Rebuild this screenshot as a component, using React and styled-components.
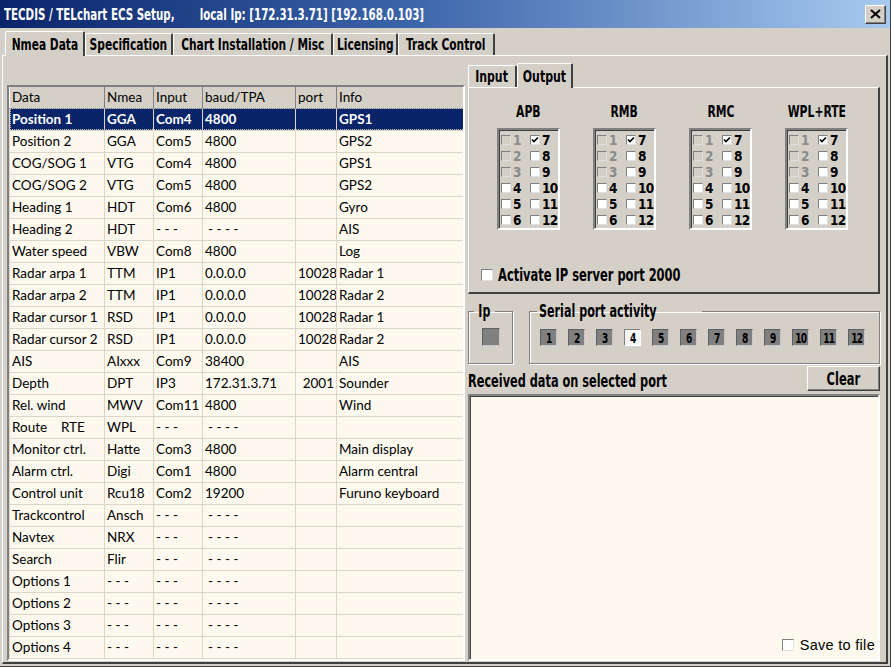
import React from 'react';
import styled, { createGlobalStyle } from 'styled-components';

const narrow = `"Liberation Sans Narrow", "DejaVu Sans Condensed", "Arial Narrow", sans-serif`;
const grid = `Lato, "Open Sans", "Liberation Sans", sans-serif`;

const GlobalStyle = createGlobalStyle`
    html, body {
        margin: 0;
        padding: 0;
        background: #d4d0c8;
    }
    * { box-sizing: border-box; }
`;

// the dialog uses a tall condensed bitmap face; squeeze DejaVu Condensed to match
const Narrow = styled.span`
    display: inline-block;
    white-space: pre;
    transform: scaleX(${p => p.$s || 0.73});
    transform-origin: ${p => p.$origin || 'center'};
    letter-spacing: ${p => p.$ls || 0}px;
`;

const Window = styled.div`
    width: 891px;
    height: 667px;
    background: #d4d0c8;
    display: flex;
    flex-direction: column;
    overflow: hidden;
    border-right: 1px solid #404040;
    border-bottom: 1px solid #404040;
`;

const TitleBar = styled.div`
    height: 28px;
    flex: none;
    display: flex;
    align-items: center;
    justify-content: space-between;
    padding: 0 4px 0 4px;
    background: linear-gradient(90deg, #0a246a 0%, #3a63a8 45%, #a6caf0 100%);
    color: #fff;
    font-family: ${narrow};
    font-weight: bold;
    font-size: 16px;
`;

const CloseButton = styled.div`
    width: 21px;
    height: 19px;
    background: #d4d0c8;
    border: 1px solid;
    border-color: #fff #404040 #404040 #fff;
    box-shadow: inset -1px -1px 0 #808080;
    display: flex;
    align-items: center;
    justify-content: center;
`;

const TabStrip = styled.div`
    height: ${p => p.$h || 27}px;
    flex: none;
    display: flex;
    align-items: flex-end;
    padding-left: ${p => p.$pad ?? 5}px;
`;

const Tab = styled.div`
    width: ${p => p.$w}px;
    height: ${p => (p.$active ? 25 : 22)}px;
    margin-bottom: ${p => (p.$active ? -1 : 0)}px;
    display: flex;
    align-items: center;
    justify-content: center;
    font-family: ${narrow};
    font-weight: bold;
    font-size: 16px;
    color: #000;
    background: #d4d0c8;
    border-top: 1px solid #fff;
    border-left: 1px solid #fff;
    border-right: 2px solid #404040;
    border-radius: 2px 2px 0 0;
    position: relative;
    z-index: ${p => (p.$active ? 2 : 1)};
`;

const Panel = styled.div`
    flex: 1;
    margin: 0 2px 4px 2px;
    border-top: 1px solid #fff;
    border-left: 1px solid #fff;
    border-right: 2px solid #404040;
    border-bottom: 2px solid #404040;
    display: flex;
    gap: 3px;
    padding: 0 6px 1px 4px;
`;

const LeftCol = styled.div`
    width: 458px;
    padding-top: 29px;
    display: flex;
`;

const GridFrame = styled.div`
    flex: 1;
    border: 2px solid;
    border-color: #808080 #fff #fff #808080;
    background: #fdf9ef;
    overflow: hidden;
`;

const Table = styled.table`
    border-collapse: collapse;
    table-layout: fixed;
    width: 455px;
    font-family: ${grid};
    font-size: 13.5px;
    color: #000;
`;

const Th = styled.th`
    height: 21px;
    background: #d4d0c8;
    font-weight: normal;
    text-align: left;
    padding: 0 2px;
    border-right: 1px solid #808080;
    border-left: 1px solid #fff;
    border-bottom: 1px solid #808080;
    white-space: nowrap;
`;

const Row = styled.tr`
    background: ${p => (p.$selected ? '#0a246a' : 'transparent')};
    color: ${p => (p.$selected ? '#fff' : '#000')};
    font-weight: ${p => (p.$selected ? 'bold' : 'normal')};
    outline: ${p => (p.$selected ? '1px dotted #c0c0c0' : 'none')};
    outline-offset: -1px;
`;

const Td = styled.td`
    height: 22px;
    padding: 0 2px;
    border: 1px solid #ddd6c6;
    white-space: pre;
    overflow: hidden;
    text-align: ${p => (p.$right ? 'right' : 'left')};
    padding-left: ${p => (p.$indent ? 5 : 2)}px;
`;

const RightCol = styled.div`
    flex: 1;
    display: flex;
    flex-direction: column;
`;

const OutputPanel = styled.div`
    height: 207px;
    border-top: 1px solid #fff;
    border-left: 1px solid #fff;
    border-right: 2px solid #404040;
    border-bottom: 2px solid #404040;
    display: flex;
    flex-direction: column;
    padding: 14px 0 0 0;
`;

const Groups = styled.div`
    display: grid;
    grid-template-columns: repeat(4, 96px);
    padding-left: 20px;
`;

const Group = styled.div`
    display: flex;
    flex-direction: column;
    align-items: center;
    width: 96px;
    padding-right: 17px;
`;

const GroupTitle = styled.div`
    font-family: ${narrow};
    font-weight: bold;
    font-size: 16px;
    height: 20px;
    line-height: 20px;
    margin-bottom: 6px;
`;

const CheckList = styled.div`
    width: 63px;
    height: 102px;
    border: 2px solid;
    border-color: #808080 #fff #fff #808080;
    box-shadow: inset 1px 1px 0 #404040;
    display: grid;
    grid-template-columns: 29px 1fr;
    grid-auto-flow: column;
    grid-template-rows: repeat(6, 16px);
    padding: 2px 0 0 2px;
`;

const CheckItem = styled.div`
    display: flex;
    align-items: center;
    gap: 2px;
    font-family: ${narrow};
    font-weight: bold;
    font-size: 13.5px;
    letter-spacing: -0.6px;
    color: ${p => (p.$disabled ? '#8a8a8a' : '#000')};
    line-height: 16px;
`;

const Box = styled.span`
    width: ${p => p.$size || 10}px;
    height: ${p => p.$size || 10}px;
    flex: none;
    background: ${p => (p.$disabled ? '#d4d0c8' : '#fff')};
    border: 1px solid;
    border-color: #808080 #e0e0e0 #e0e0e0 #808080;
    display: inline-flex;
    align-items: center;
    justify-content: center;
`;

const Check = () => (
    <svg width="8" height="8" viewBox="0 0 8 8">
        <path d="M1 3.5 L3 5.5 L7 1.5" stroke="#000" strokeWidth="1.6" fill="none" />
    </svg>
);

const CheckLine = styled.label`
    display: flex;
    align-items: center;
    gap: 5px;
    margin: auto 0 7px 12px;
    font-family: ${narrow};
    font-weight: bold;
    font-size: 17px;
`;

const ActivityRow = styled.div`
    display: flex;
    gap: 16px;
    margin-top: 7px;
`;

const GroupBox = styled.fieldset`
    margin: 0;
    height: 63px;
    width: ${p => p.$w}px;
    border: 1px solid #808080;
    box-shadow: 1px 1px 0 #fff, inset 1px 1px 0 #fff;
    padding: 0;
    font-family: ${narrow};
    font-weight: bold;

    legend {
        font-size: 17px;
        padding: 0 2px;
        margin-left: ${p => p.$lm || 6}px;
    }
`;

const LedRow = styled.div`
    display: flex;
    gap: 11px;
    padding: ${p => p.$pt}px 0 0 ${p => p.$pl}px;
`;

const Led = styled.div`
    width: ${p => p.$size || 17}px;
    height: ${p => p.$size || 17}px;
    flex: none;
    background: ${p => (p.$on ? '#f4f4f4' : '#808080')};
    border: 1px solid;
    border-color: ${p => (p.$on ? '#808080 #fff #fff #808080' : '#606060 #c8c8c8 #c8c8c8 #606060')};
    display: flex;
    align-items: center;
    justify-content: center;
    font-size: 14px;
    color: #000;
`;

const DataHeader = styled.div`
    display: flex;
    align-items: flex-end;
    justify-content: space-between;
    height: 28px;
    padding-bottom: 1px;
    font-family: ${narrow};
    font-weight: bold;
    font-size: 17px;
`;

const Button = styled.div`
    width: 73px;
    height: 25px;
    display: flex;
    align-items: center;
    justify-content: center;
    border: 1px solid;
    border-color: #fff #404040 #404040 #fff;
    box-shadow: inset -1px -1px 0 #808080;
    font-size: 17px;
`;

const DataArea = styled.div`
    flex: 1;
    margin-top: 2px;
    background: #fdf9ef;
    border: 2px solid;
    border-color: #808080 #fff #fff #808080;
    box-shadow: inset 1px 1px 0 #404040;
    display: flex;
    align-items: flex-end;
    justify-content: flex-end;
    padding: 0 3px 6px 0;
`;

const SaveLabel = styled.label`
    display: flex;
    align-items: center;
    gap: 6px;
    font-family: "Liberation Sans", Arial, sans-serif;
    font-size: 14.5px;
    letter-spacing: 0.3px;
`;

const dash3 = '- - -';
const dash4 = '- - - -';

const rows = [
    ['Position 1', 'GGA', 'Com4', '4800', '', 'GPS1'],
    ['Position 2', 'GGA', 'Com5', '4800', '', 'GPS2'],
    ['COG/SOG 1', 'VTG', 'Com4', '4800', '', 'GPS1'],
    ['COG/SOG 2', 'VTG', 'Com5', '4800', '', 'GPS2'],
    ['Heading 1', 'HDT', 'Com6', '4800', '', 'Gyro'],
    ['Heading 2', 'HDT', dash3, dash4, '', 'AIS'],
    ['Water speed', 'VBW', 'Com8', '4800', '', 'Log'],
    ['Radar arpa 1', 'TTM', 'IP1', '0.0.0.0', '10028', 'Radar 1'],
    ['Radar arpa 2', 'TTM', 'IP1', '0.0.0.0', '10028', 'Radar 2'],
    ['Radar cursor 1', 'RSD', 'IP1', '0.0.0.0', '10028', 'Radar 1'],
    ['Radar cursor 2', 'RSD', 'IP1', '0.0.0.0', '10028', 'Radar 2'],
    ['AIS', 'AIxxx', 'Com9', '38400', '', 'AIS'],
    ['Depth', 'DPT', 'IP3', '172.31.3.71', '2001', 'Sounder'],
    ['Rel. wind', 'MWV', 'Com11', '4800', '', 'Wind'],
    ['Route    RTE', 'WPL', dash3, dash4, '', ''],
    ['Monitor ctrl.', 'Hatte', 'Com3', '4800', '', 'Main display'],
    ['Alarm ctrl.', 'Digi', 'Com1', '4800', '', 'Alarm central'],
    ['Control unit', 'Rcu18', 'Com2', '19200', '', 'Furuno keyboard'],
    ['Trackcontrol', 'Ansch', dash3, dash4, '', ''],
    ['Navtex', 'NRX', dash3, dash4, '', ''],
    ['Search', 'Flir', dash3, dash4, '', ''],
    ['Options 1', dash3, dash3, dash4, '', ''],
    ['Options 2', dash3, dash3, dash4, '', ''],
    ['Options 3', dash3, dash3, dash4, '', ''],
    ['Options 4', dash3, dash3, dash4, '', ''],
];

const widths = [95, 49, 49, 93, 41, 128];
const heads = ['Data', 'Nmea', 'Input', 'baud/TPA', 'port', 'Info'];
const outputs = ['APB', 'RMB', 'RMC', 'WPL+RTE'];
const mainTabs = [
    ['Nmea Data', 80, true],
    ['Specification', 88],
    ['Chart Installation / Misc', 160],
    ['Licensing', 65],
    ['Track Control', 97],
];
const ports = [1, 2, 3, 4, 5, 6, 7, 8, 9, 10, 11, 12];

const App = () => {
    return (
        <Window>
            <GlobalStyle />
            <TitleBar>
                <Narrow $origin="left" $s={0.715}>{'TECDIS / TELchart ECS Setup,       local Ip: [172.31.3.71] [192.168.0.103]'}</Narrow>
                <CloseButton>
                    <svg width="11" height="10" viewBox="0 0 11 10">
                        <path d="M1 1 L10 9 M10 1 L1 9" stroke="#000" strokeWidth="2" />
                    </svg>
                </CloseButton>
            </TitleBar>
            <TabStrip>
                {mainTabs.map(([label, w, active]) => (
                    <Tab key={label} $w={w} $active={active}>
                        <Narrow $s={0.74}>{label}</Narrow>
                    </Tab>
                ))}
            </TabStrip>
            <Panel>
                <LeftCol>
                    <GridFrame>
                        <Table>
                            <colgroup>
                                {widths.map((w, i) => <col key={i} style={{ width: w }} />)}
                            </colgroup>
                            <thead>
                                <tr>{heads.map(h => <Th key={h}>{h}</Th>)}</tr>
                            </thead>
                            <tbody>
                                {rows.map((r, i) => (
                                    <Row key={i} $selected={i === 0}>
                                        <Td>{r[0]}</Td>
                                        <Td>{r[1]}</Td>
                                        <Td>{r[2]}</Td>
                                        <Td $indent={r[3] === dash4}>{r[3]}</Td>
                                        <Td $right>{r[4]}</Td>
                                        <Td>{r[5]}</Td>
                                    </Row>
                                ))}
                            </tbody>
                        </Table>
                    </GridFrame>
                </LeftCol>
                <RightCol>
                    <TabStrip $pad={0} $h={31}>
                        <Tab $w={49}><Narrow $s={0.76}>Input</Narrow></Tab>
                        <Tab $w={56} $active><Narrow $s={0.76}>Output</Narrow></Tab>
                    </TabStrip>
                    <OutputPanel>
                        <Groups>
                            {outputs.map(name => (
                                <Group key={name}>
                                    <GroupTitle><Narrow $s={0.75}>{name}</Narrow></GroupTitle>
                                    <CheckList>
                                        {ports.map(n => (
                                            <CheckItem key={n} $disabled={n <= 3}>
                                                <Box $disabled={n <= 3}>{n === 7 && <Check />}</Box>
                                                {n}
                                            </CheckItem>
                                        ))}
                                    </CheckList>
                                </Group>
                            ))}
                        </Groups>
                        <CheckLine>
                            <Box $size={12} />
                            <Narrow $s={0.75} $origin="left">Activate IP server port 2000</Narrow>
                        </CheckLine>
                    </OutputPanel>
                    <ActivityRow>
                        <GroupBox $w={45} $lm={5}>
                            <legend><Narrow $s={0.72}>Ip</Narrow></legend>
                            <LedRow $pl={13} $pt={7}>
                                <Led $size={18} />
                            </LedRow>
                        </GroupBox>
                        <GroupBox $w={351} $lm={7}>
                            <legend><Narrow $s={0.73} $origin="left">Serial port activity</Narrow></legend>
                            <LedRow $pl={10} $pt={8}>
                                {ports.map(n => (
                                    <Led key={n} $on={n === 4}>
                                        <Narrow $s={0.72} $ls={-1}>{n}</Narrow>
                                    </Led>
                                ))}
                            </LedRow>
                        </GroupBox>
                    </ActivityRow>
                    <DataHeader>
                        <Narrow $s={0.74} $origin="left">Received data on selected port</Narrow>
                        <Button><Narrow $s={0.75}>Clear</Narrow></Button>
                    </DataHeader>
                    <DataArea>
                        <SaveLabel>
                            <Box $size={12} />
                            Save to file
                        </SaveLabel>
                    </DataArea>
                </RightCol>
            </Panel>
        </Window>
    );
};

export default App;
